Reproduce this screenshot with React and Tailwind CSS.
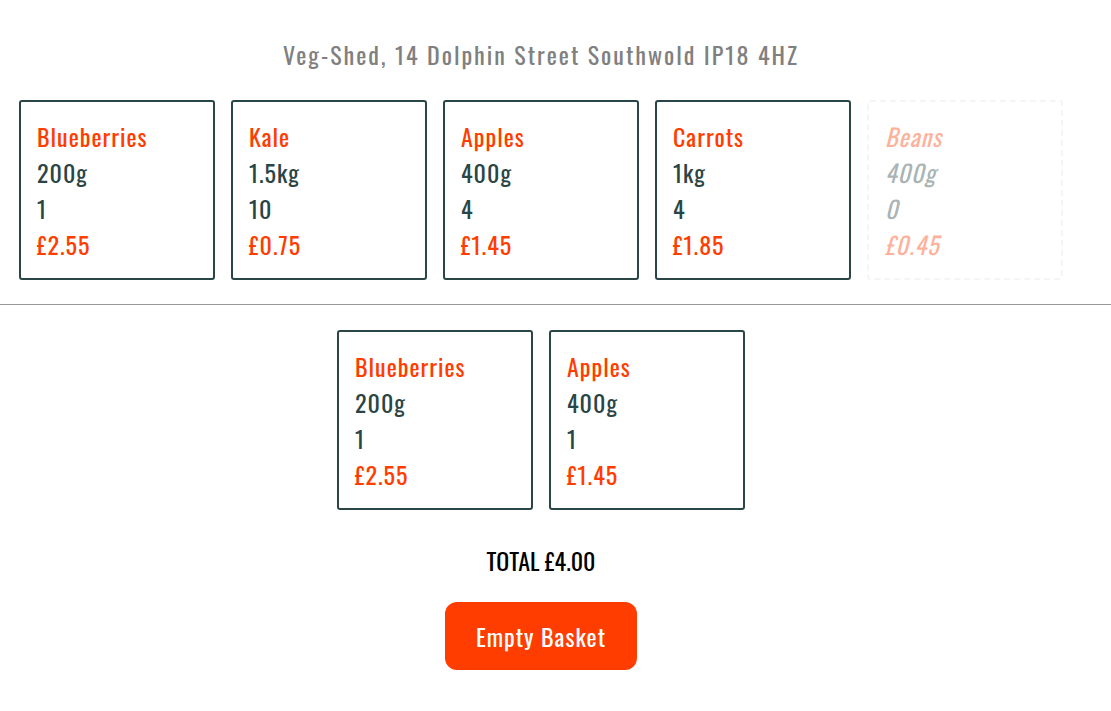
import React, { useState } from 'react';

const stock = [
  { name: 'Blueberries', size: '200g', qty: 1, price: '£2.55' },
  { name: 'Kale', size: '1.5kg', qty: 10, price: '£0.75' },
  { name: 'Apples', size: '400g', qty: 4, price: '£1.45' },
  { name: 'Carrots', size: '1kg', qty: 4, price: '£1.85' },
  { name: 'Beans', size: '400g', qty: 0, price: '£0.45' },
];

const basket = [
  { name: 'Blueberries', size: '200g', qty: 1, price: '£2.55' },
  { name: 'Apples', size: '400g', qty: 1, price: '£1.45' },
];

function ProductCard({ item }) {
  const soldOut = item.qty === 0;
  return (
    <div
      className={`w-[196px] h-[180px] rounded-[3px] px-4 py-4 text-[24px] leading-[36px] tracking-[1px] ${
        soldOut
          ? 'border-2 border-dashed border-[#e8e8e8] italic opacity-40'
          : 'border-2 border-[#2a4545]'
      }`}
    >
      <div className="text-[#ff3d00]">{item.name}</div>
      <div className="text-[#2a4545]">{item.size}</div>
      <div className="text-[#2a4545]">{item.qty}</div>
      <div className="text-[#ff3d00]">{item.price}</div>
    </div>
  );
}

export default function App() {
  const [items, setItems] = useState(basket);

  return (
    <div
      className="w-[1082px] bg-white"
      style={{ fontFamily: "Oswald, 'Liberation Sans Narrow', 'DejaVu Sans Condensed', sans-serif" }}
    >
      <h1 className="pt-[36px] pb-[2px] text-center text-[24px] leading-[36px] tracking-[2px] text-[#808080]">
        Veg-Shed, 14 Dolphin Street Southwold IP18 4HZ
      </h1>

      <div className="mt-[26px] flex flex-wrap justify-center gap-4">
        {stock.map(item => (
          <ProductCard key={item.name} item={item} />
        ))}
      </div>

      <div className="mt-6 w-[1111px] border-t border-[#999999]"></div>

      <div className="mt-[25px] flex flex-wrap justify-center gap-4">
        {items.map(item => (
          <ProductCard key={item.name} item={item} />
        ))}
      </div>

      <div className="mt-[32px] text-center text-[24px] leading-[36px] text-black">
        TOTAL £4.00
      </div>

      <div className="mt-[24px] flex justify-center">
        <button
          onClick={() => setItems([])}
          className="w-[192px] h-[68px] rounded-xl bg-[#ff3d00] text-white text-[24px] tracking-[1px]"
        >
          Empty Basket
        </button>
      </div>
    </div>
  );
}
